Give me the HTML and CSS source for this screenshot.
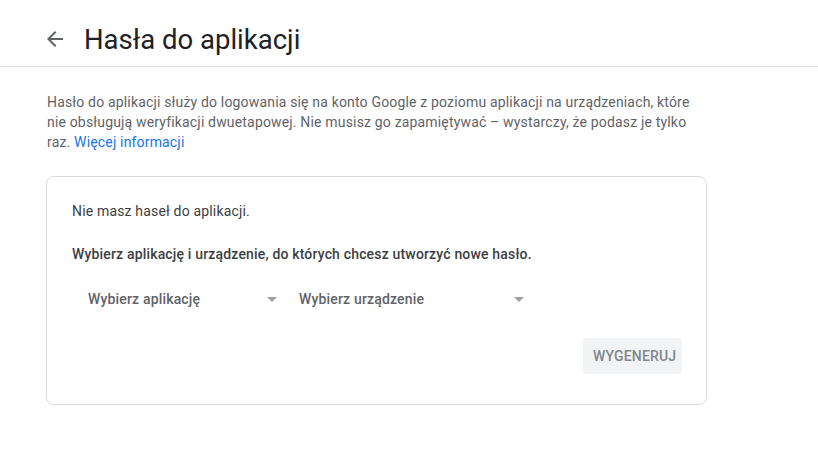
FILE: index.html
```html
<!DOCTYPE html>
<html lang="pl">
<head>
<meta charset="utf-8">
<link rel="stylesheet" href="styles.css">
</head>
<body>
<header class="header">
  <span class="back" aria-label="Wstecz">
    <svg width="24" height="24" viewBox="0 0 24 24"><path d="M20 11H7.83l5.59-5.59L12 4l-8 8 8 8 1.41-1.41L7.83 13H20v-2z" fill="#5f6368"/></svg>
  </span>
  <h1 class="title">Hasła do aplikacji</h1>
</header>
<main class="content">
  <p class="intro">Hasło do aplikacji służy do logowania się na konto Google z poziomu aplikacji na urządzeniach, które nie obsługują weryfikacji dwuetapowej. Nie musisz go zapamiętywać – wystarczy, że podasz je tylko raz. <a class="link" href="#">Więcej informacji</a></p>
  <section class="card">
    <p class="empty">Nie masz haseł do aplikacji.</p>
    <p class="prompt">Wybierz aplikację i urządzenie, do których chcesz utworzyć nowe hasło.</p>
    <div class="selects">
      <div class="select select-app"><span>Wybierz aplikację</span><span class="caret"></span></div>
      <div class="select select-dev"><span>Wybierz urządzenie</span><span class="caret"></span></div>
    </div>
    <div class="actions">
      <button class="btn" disabled>WYGENERUJ</button>
    </div>
  </section>
</main>
</body>
</html>
```
FILE: styles.css
```css
html, body {
  margin: 0;
  padding: 0;
  background: #fff;
  font-family: Roboto, "Liberation Sans", Arial, sans-serif;
  color: #3c4043;
}
.header {
  height: 54px;
  padding-top: 12px;
  border-bottom: 1px solid #dadce0;
  display: flex;
  align-items: center;
  padding-left: 43px;
  box-sizing: content-box;
}
.back {
  width: 24px;
  height: 24px;
  display: flex;
  margin-right: 17px;
}
.title {
  margin: 0;
  font-size: 27.5px;
  font-weight: 400;
  color: #202124;
  letter-spacing: 0;
}
.content {
  padding: 25px 0 0 47px;
  width: 660px;
}
.intro {
  margin: 0;
  font-size: 14px;
  line-height: 20px;
  color: #5f6368;
  width: 655px;
  letter-spacing: 0.17px;
}
.link {
  color: #1a73e8;
  text-decoration: none;
}
.card {
  margin-top: 24px;
  margin-left: -1px;
  border: 1px solid #dadce0;
  border-radius: 8px;
  padding: 24px 24px 30px 25px;
  width: 610px;
  letter-spacing: 0.17px;
}
.empty {
  margin: 0;
  font-size: 14px;
  line-height: 20px;
  color: #3c4043;
}
.prompt {
  margin: 23px 0 0;
  font-size: 14px;
  line-height: 20px;
  font-weight: 500;
  color: #3c4043;
}
.selects {
  display: flex;
  margin-top: 15px;
}
.select {
  display: flex;
  align-items: center;
  justify-content: space-between;
  height: 40px;
  padding-left: 16px;
  padding-right: 6px;
  font-size: 14px;
  font-weight: 500;
  color: #5f6368;
  box-sizing: border-box;
}
.select-app { width: 211px; }
.select-dev { width: 247px; }
.caret {
  width: 0;
  height: 0;
  border-left: 5px solid transparent;
  border-right: 5px solid transparent;
  border-top: 5px solid #9aa0a6;
}
.actions {
  display: flex;
  justify-content: flex-end;
  margin-top: 19px;
}
.btn {
  height: 36px;
  padding: 0 10px;
  border: none;
  border-radius: 4px;
  background: #f1f3f4;
  color: #80868b;
  font-family: Roboto, "Liberation Sans", Arial, sans-serif;
  font-size: 14px;
  font-weight: 500;
  width: 99px;
  letter-spacing: 0.17px;
}
```
